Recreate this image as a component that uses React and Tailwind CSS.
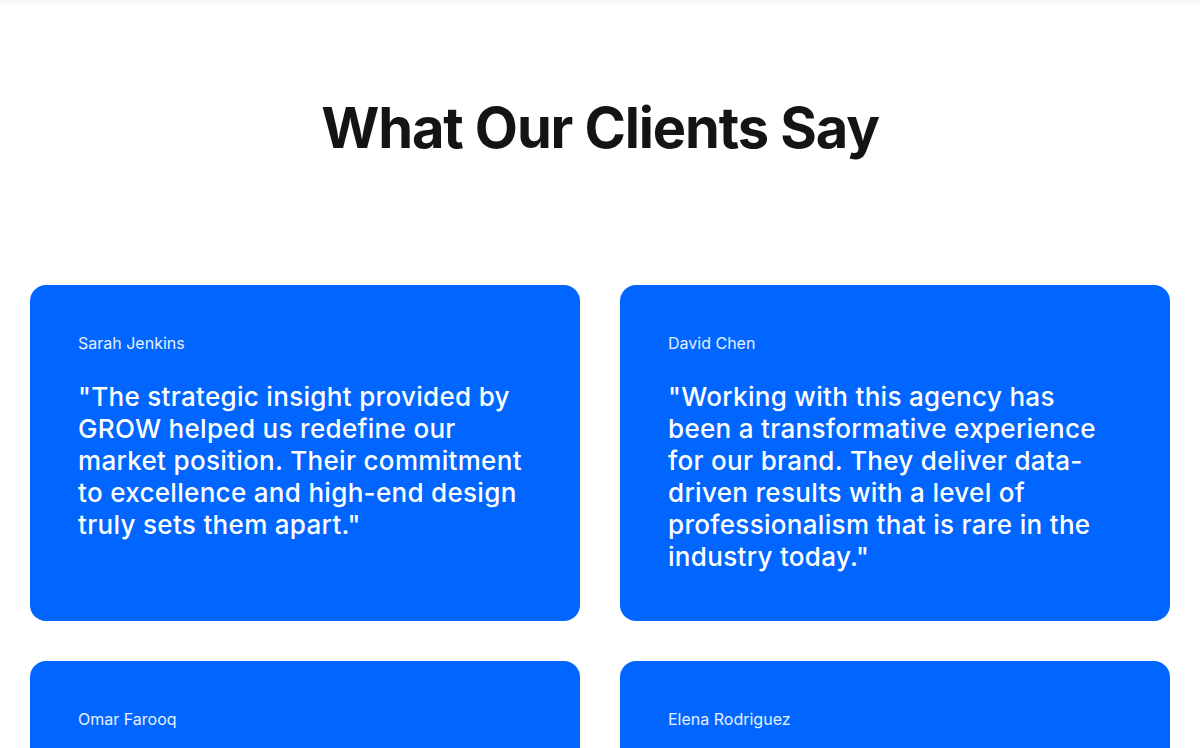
export default function App() {
  const testimonials = [
    {
      name: "Sarah Jenkins",
      quote:
        '"The strategic insight provided by GROW helped us redefine our market position. Their commitment to excellence and high-end design truly sets them apart."',
    },
    {
      name: "David Chen",
      quote:
        '"Working with this agency has been a transformative experience for our brand. They deliver data-driven results with a level of professionalism that is rare in the industry today."',
    },
    {
      name: "Omar Farooq",
      quote:
        '"From the first workshop to the final launch, the team brought clarity, energy and craft to every decision we made together."',
    },
    {
      name: "Elena Rodriguez",
      quote:
        '"Our conversion rates doubled within a quarter. GROW combines sharp thinking with beautiful execution like no one else."',
    },
  ];

  return (
    <div
      className="min-h-screen bg-white text-[#111111]"
      style={{ fontFamily: "Inter, 'Noto Sans', sans-serif" }}
    >
      {/* faint edge of the sticky header above the fold */}
      <div className="h-[6px] bg-gradient-to-b from-[#f5f6f9] to-white" />
      <section className="px-[30px] pt-[91px]">
        <h1 className="text-center text-[56px] font-bold leading-[62px] tracking-[-0.02em] text-[#141414]">
          What Our Clients Say
        </h1>
        <div className="mt-[126px] grid grid-cols-2 gap-x-[40px] gap-y-[40px]">
          {testimonials.map((t) => (
            <article
              key={t.name}
              className="rounded-[16px] bg-[#0066ff] px-[48px] pt-[48px] pb-[48px] text-white"
            >
              <p className="text-[16px] leading-[20px] text-white/90">{t.name}</p>
              <p className="mt-[28px] text-[26px] font-medium leading-[32px] tracking-[0.012em]">
                {t.quote}
              </p>
            </article>
          ))}
        </div>
      </section>
    </div>
  );
}
